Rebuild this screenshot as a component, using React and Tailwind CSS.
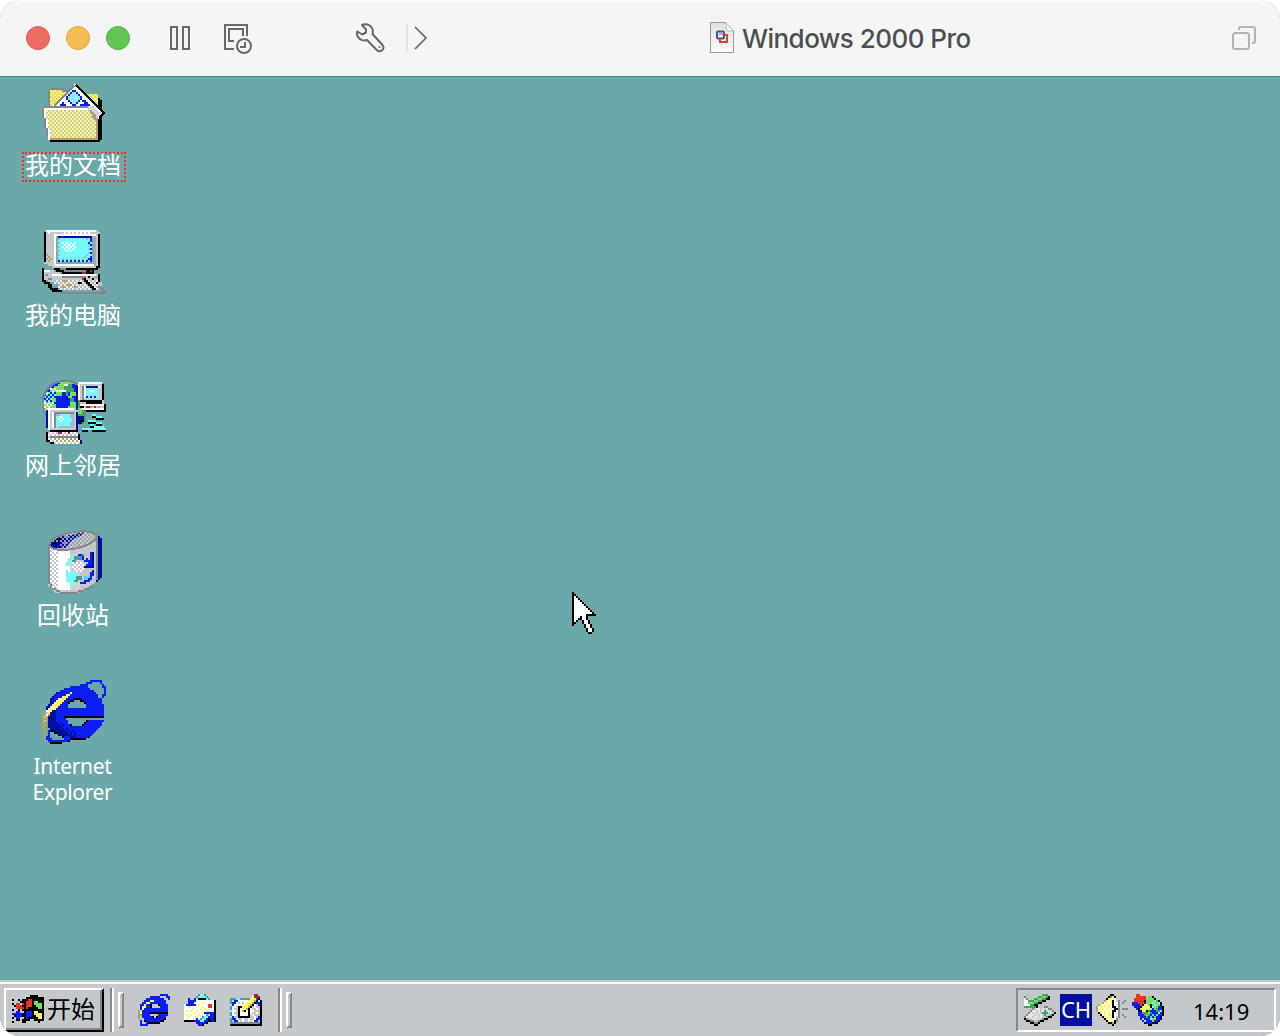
const CJK = "font-['Noto_Sans',_'Noto_Sans_CJK_SC',_sans-serif]";

const PALETTE = {
  K: "#000000", W: "#ffffff", B: "#0a1ef5", N: "#000f9e", C: "#75fbfd", T: "#4b9a9c",
  G: "#75e15a", D: "#3ea55a", R: "#ea3323", Y: "#fbf75c", O: "#b0a55a", S: "#c5c8ca",
  M: "#84888a", P: "#8c2a55", L: "#e4e6e7",
};

function Bitmap({ rows, className }) {
  const w = Math.max(...rows.map((r) => r.length));
  return (
    <svg className={className} width={w * 2} height={rows.length * 2} viewBox={`0 0 ${w} ${rows.length}`} shapeRendering="crispEdges">
      {rows.flatMap((row, y) =>
        [...row.matchAll(/([A-Z])\1*/g)].map((m) => (
          <rect key={`${y}-${m.index}`} x={m.index} y={y} width={m[0].length} height={1} fill={PALETTE[m[1]]} />
        )),
      )}
    </svg>
  );
}

function Check({ id, a, b }) {
  return (
    <pattern id={id} width="2" height="2" patternUnits="userSpaceOnUse">
      <rect width="2" height="2" fill={a} />
      <path d="M0 0h1v1h-1zM1 1h1v1h-1z" fill={b} />
    </pattern>
  );
}

function Icon32({ children }) {
  return (
    <svg width="64" height="64" viewBox="0 0 32 32" shapeRendering="crispEdges" className="block">
      {children}
    </svg>
  );
}

function DocsIcon() {
  return (
    <Icon32>
      <defs>
        <Check id="fold" a="#fbf87a" b="#c8cbb6" />
        <Check id="foldback" a="#fbf75c" b="#d9dc78" />
        <Check id="dia" a="#75fbfd" b="#a9dcf5" />
      </defs>
      <path d="M4 5h6v1h2v1h16v3h1v5H4z" fill="url(#foldback)" />
      <path d="M4 4h7v1H4zM3 5h1v8H3zM11 5h2v1h-2z" fill="#84888a" />
      <path d="M28 9h1v1h1v20h-2z" fill="#000" />
      <path d="M16.500 2L31 16.500l-3 3-4-5.500H5v-1z" fill="#fff" />
      <path d="M16 3L6 13" stroke="#84888a" strokeWidth="1" fill="none" />
      <path d="M17 2.500L31 16.500L28.500 19" stroke="#000" strokeWidth="1" fill="none" />
      <path d="M15 5h2v1h1v1h1v1h1v2h-1v1h-1v1h-1v1h-2v-1h-1v-1h-1v-1h-1V8h1V7h1V6h1z" fill="#0a1ef5" />
      <path d="M15 6h2v1h1v1h1v2h-1v1h-1v1h-2v-1h-1v-1h-1V8h1V7h1z" fill="url(#dia)" />
      <path d="M10 11h1v1h1v1H9v-1h1zM20 10h2v1h1v1h1v1h-5v-1h1z" fill="#0a1ef5" />
      <path d="M20 11h1v1h-1z" fill="#fff" />
      <path d="M2 14h22v1h2v1h1v1h1v13H4v-4H3v-5H2v-6H1v-1h1z" fill="url(#fold)" />
      <path d="M1 13h23v1H1zM0 14h1v5H0zM1 19h1v5H1zM2 24h1v4H2zM3 28h1v2H3z" fill="#84888a" />
      <path d="M1 14h22v1H2v4H1zM2 19h1v5H2zM3 24h1v6H3z" fill="#fff" />
      <path d="M23 13h3v1h1v1h1v1h2v1h-1v1h-1v1h-1v-1h-1v-1h-1v-2h-2z" fill="#d3d6d7" />
      <path d="M24 15h1v1h1v1h1v2h1v1h-2v-1h-1v-2h-1z" fill="#a5a28a" />
      <path d="M27 19h1v11H4v-1h23z" fill="#b0a55a" />
      <path d="M4 30h25v1H4z" fill="#000" />
    </Icon32>
  );
}

function ComputerIcon() {
  return (
    <Icon32>
      <defs>
        <Check id="scr" a="#75fbfd" b="#9fbcc8" />
        <Check id="scrb" a="#0a1ef5" b="#75fbfd" />
        <Check id="spark" a="#75fbfd" b="#ffffff" />
        <Check id="keys" a="#b4b7b9" b="#eceeef" />
        <Check id="trim" a="#c5c8ca" b="#ffffff" />
      </defs>
      <path d="M2 0h26v1h1v18H5v-1H3v-1H1V1h1z" fill="#c5c8ca" />
      <path d="M2 0h25v1H4v1H3V1H2z" fill="#fff" />
      <path d="M10 1h15v1H10z" fill="url(#trim)" />
      <path d="M1 1h1v15H1z" fill="#000" />
      <path d="M28 2h1v17h-1v1H6v-1h21v-1h1z" fill="#000" />
      <path d="M6 2h21v1H7v14h20v1H6z" fill="#fff" />
      <path d="M26 3h1v15h-1z" fill="#a5a9ab" />
      <path d="M7 3h19v14H7z" fill="url(#scr)" />
      <path d="M9 4h13v2h1v6h-2v2H9z" fill="#75fbfd" />
      <path d="M10 6h7v4h-1v1h-5V9h-1z" fill="url(#spark)" />
      <path d="M23 5h2v10h-2v-2h1V7h-1zM8 15h17v1H8z" fill="url(#scrb)" />
      <path d="M8 3h17v1H8z" fill="#000f9e" />
      <path d="M7 3h1v13H7zM25 4h1v13h-1zM7 16h19v1H7z" fill="#84a9ad" />
      <path d="M24 4h1v1h-1zM24 13h1v2h-1zM9 3h2v1H9z" fill="#0a1ef5" />
      <path d="M2 12h1v1H2zM3 13h1v1H3zM2 14h1v1H2zM4 14h1v1H4zM3 15h1v1H3z" fill="#b0a55a" />
      <path d="M7 20h19v2H10v-1H7z" fill="#000" />
      <path d="M9 19h3v1h10v1H11v-1H9z" fill="#84888a" />
      <path d="M1 20h5v1h3v1h19v4h2v3h-2v-2H6v-1H3v-1H1z" fill="#c5c8ca" />
      <path d="M1 20h3v1H1zM5 22h22v1H5z" fill="#fff" />
      <path d="M0 19h1v6h1v1h2v1h1v2h2v2H5v-1H4v-1H3v-2H1v-1H0zM28 22h1v4h-1z" fill="#000" />
      <path d="M2 22h1v1H2zM3 24h2v1H3zM10 23h12v1H10z" fill="#84888a" />
      <path d="M20 21h2v1h-2zM24 20h1v1h-1zM20 24h1v1h-1z" fill="#b01f4b" />
      <path d="M6 25h22v2h1v2h1v1H9v-1H8v-2H6z" fill="url(#keys)" />
      <path d="M10 25h3v1h-3zM12 27h3v1h-3zM10 28h2v1h-2zM16 28h2v1h-2zM26 23h2v1h-2zM25 26h1v1h-1z" fill="#b0a55a" />
      <path d="M21 24h1v1h1v1h1v1h1v1h1v1h1v1h-2v-1h-1v-1h-1v-1h-1v-1h-1zM25 24h1v1h-1zM27 26h1v1h-1zM23 23h1v1h-1zM18 26h2v1h-2z" fill="#000" />
      <path d="M28 28h2v1h1v1h1v2H9v-1h21v-1h-1v-1h-1z" fill="#84888a" />
      <path d="M6 29h2v1h2v1H7v-1H6z" fill="#000" />
    </Icon32>
  );
}

function NetworkIcon() {
  return (
    <Icon32>
      <defs>
        <Check id="sea" a="#75fbfd" b="#0a1ef5" />
        <Check id="land" a="#75e15a" b="#ffffff" />
        <Check id="kbd" a="#c5c8ca" b="#ffffff" />
        <Check id="kbk" a="#b0a55a" b="#ffffff" />
        <clipPath id="globe">
          <circle cx="11.500" cy="11.500" r="11.500" />
        </clipPath>
      </defs>
      <g clipPath="url(#globe)">
        <rect width="24" height="24" fill="#0a1ef5" />
        <path d="M9 1h3V0h4v1h2v1h-4v2h-2v2h-2v2H7v3H3V9H2V6h2V4h2V3h2V2h1z" fill="#75e15a" />
        <path d="M4 4h4v2H6v3H2V6h2zM0 11h6v6H1v-2H0z" fill="url(#land)" />
        <path d="M3 6h4v3H5v2H1V8h2z" fill="url(#sea)" />
        <path d="M11 2h3v1h-3zM8 5h4v1H8z" fill="#fff" />
        <path d="M13 2h2v2h1v2h-3v2h-1V5h-1V3h2zM13 8h2v1h1v2h-2V9h-1zM15 12h2v1h-2zM17 10h2v4h-3v-2h1z" fill="#3ea55a" />
        <path d="M14 6h3v2h-2v1h-2V8h1zM14 11h4v2h-1v2h-4v-2h1zM5 12h2v2H5z" fill="#75e15a" />
        <path d="M17 1h1v13h-1zM12 8h1v2h-1z" fill="#000f9e" />
        <circle cx="11.500" cy="11.500" r="11" fill="none" stroke="#84888a" />
      </g>
      <path d="M18 14h3v3h1v4h-1v1h-3z" fill="#3ea55a" />
      <path d="M18 14h2v3h-2z" fill="#75e15a" />
      <path d="M18 18h3v3h-1v1h-2z" fill="#000f9e" />
      <path d="M19 20h2v1h-1v1h-1z" fill="#000" />

      <path d="M18 1h12v1h1v9H19v-1h-1z" fill="#c5c8ca" />
      <path d="M18 1h12v1H19v8h-1zM21 3h8v1h-7v5h-1z" fill="#fff" />
      <path d="M20 3h1v7h9v1H20z" fill="#84888a" />
      <path d="M22 3h6v6h-6z" fill="#000f9e" />
      <path d="M22 4h6v4h-6z" fill="#75fbfd" />
      <path d="M24 5h2v1h-2z" fill="#fff" />
      <path d="M22 8h6v1h-6z" fill="url(#sea)" />
      <path d="M30 2h1v8h-1v1H19v-1h11z" fill="#000" />
      <path d="M19 11h12v5H22v-1h-3z" fill="#c5c8ca" />
      <path d="M19 12h12v1H19zM20 14h11v1H20z" fill="#fff" />
      <path d="M19 13h2v1h-2zM22 11h8v1h-8zM31 12h1v4H22v-1h9z" fill="#000" />
      <path d="M22 13h2v1h-2zM26 13h1v1h-1z" fill="#b01f4b" />
      <path d="M24 13h1v1h-1zM28 13h1v1h-1z" fill="#b0a55a" />

      <path d="M3 14h14v1h1v11H4v-1H3z" fill="#c5c8ca" />
      <path d="M3 14h13v1H4v10H3zM5 16h11v1H6v7H5z" fill="#fff" />
      <path d="M6 16h10v8H6z" fill="#84888a" />
      <path d="M7 17h9v7H7z" fill="#75fbfd" />
      <path d="M7 17h2v1H7zM14 17h2v7H8v-1h6v-2h1v-2h-1z" fill="#9fbcc8" />
      <path d="M9 18h1v1H9zM8 19h1v1H8zM10 19h1v1h-1zM9 20h1v1H9z" fill="#fff" />
      <path d="M2 15h1v9H2zM17 16h1v9h-1z" fill="#000f9e" />
      <path d="M4 25h14v1H4z" fill="#000" />
      <path d="M3 26h15v4h1v2H6v-1H3z" fill="url(#kbd)" />
      <path d="M6 29h12v2H6z" fill="url(#kbk)" />
      <path d="M2 26h1v4h1v1h2v1H4v-1H2zM18 27h1v3h-1z" fill="#000" />
      <path d="M4 28h14v1H4zM14 29h1v1h-1z" fill="#84888a" />
      <path d="M8 26h2v1H8zM13 26h1v1h-1z" fill="#b01f4b" />
      <path d="M19 30h1v2h-1z" fill="#000f9e" />

      <path d="M25 17h2v1h-2zM27 18h3v1h-3zM23 20h4v1h-4zM27 21h3v1h-3zM24 22h2v1h-2zM26 23h5v1h-5zM20 24h12v1H20z" fill="#75fbfd" />
      <path d="M25 18h2v1h-2zM27 19h4v1h-4zM23 21h4v1h-4zM27 22h3v1h-3zM24 23h2v1h-2zM20 25h3v1h-3zM25 25h7v1h-7z" fill="#000" />
    </Icon32>
  );
}

function BinIcon() {
  return (
    <Icon32>
      <defs>
        <Check id="bin" a="#ffffff" b="#c5c8ca" />
        <Check id="glass" a="#9da4a7" b="#c5c8ca" />
        <Check id="deep" a="#000f9e" b="#8a9fc0" />
        <clipPath id="mouth">
          <ellipse cx="15.500" cy="5.300" rx="11.500" ry="3.600" transform="rotate(-11 15.500 5.300)" />
        </clipPath>
      </defs>
      <path d="M3 7l13-6h8l3 2v23l-9 5.500H7L3 28z" fill="#c5c8ca" />
      <path d="M4 9h5v21H6l-2-2z" fill="url(#bin)" />
      <path d="M8 11h6v19H8zM5 10h9v1H5z" fill="#fff" />
      <path d="M14 12l5-1v19h-5z" fill="#d0d3d4" />
      <path d="M3 7h1v20H3zM4 27h1v2H4zM5 29h2v1H5zM7 30h2v1H7zM9 31h9v1H9zM18 30h3v1h-3zM21 29h3v1h-3zM24 28h2v1h-2z" fill="#84888a" />
      <g clipPath="url(#mouth)">
        <rect width="32" height="12" fill="url(#glass)" />
        <path d="M3 3h9l9-2-2 2-4 2-3 4H3z" fill="url(#deep)" />
        <path d="M4 6h5v3H4z" fill="#000f9e" />
        <path d="M7 4h3v1H7zM5 6h2v1H5z" fill="#000" />
        <path d="M9 7h1v1H9zM11 6h1v1h-1zM12 3h1v1h-1z" fill="#c06fd0" />
      </g>
      <ellipse cx="15.500" cy="5.300" rx="12" ry="4.100" transform="rotate(-11 15.500 5.300)" fill="none" stroke="#84888a" />
      <path d="M28 3h1v22h-1v1h-1v-1h1zM29 4h1v20h-1z" fill="#000f9e" />
      <path d="M27 2h1v23h-1z" fill="#84888a" />
      <path d="M13 14h2v-1h2v1h1v1h-3v1h-1v2h-2v-2h1z" fill="#75fbfd" />
      <path d="M12 20h1v1h5v1h-1v1h1v3h-2v2h-2v-2h-2z" fill="#75fbfd" />
      <path d="M16 13h3v-1h2v2h-1v1h-3v1h-2v-1h1zM17 23h3v2h-2v1h-2v-1h1z" fill="#4b9a9c" />
      <path d="M15 16h5v1h1v3h-1v1h-3v-1h-2z" fill="url(#bin)" />
      <path d="M18 12h2v1h1v2h1v-1h1v1h1v-4h2v8h-5v-1h1v-1h1v-1h-2v-1h-1v-2h-2z" fill="#0a1ef5" />
      <path d="M25 11h1v8h-5v-1h4z" fill="#000f9e" />
      <path d="M25 20h1v3h-1v2h-1v1h-2v1h-3v-1h2v-1h2v-2h1v-2h1z" fill="#0a1ef5" />
      <path d="M21 23h3v1h-1v1h-2z" fill="#75c9ee" />
    </Icon32>
  );
}

const IE_LARGE = [
  "........................BBBBBB..",
  "......................BBB....B..",
  "...................BBBB.......B.",
  "..............BBBBBBBBB.......BB",
  "...........BBBBBBBBBBBBB.......B",
  ".........BBBBBBBBBBBBBBBBB.....B",
  ".......NBBBBBBYBBBBBBBBBBBB....B",
  "......NBBBBBYYBBBBBBBBBBBBBB..BB",
  ".....NBBBBYYYBBBBBBBBBBBBBBB..B.",
  "....NNBBYYYYBBBBKKKKBBBBBBBBBB..",
  "....NBBYYYYBBBKK...KKBBBBBBBBB..",
  "....NBYYYYBBBK.......KBBBBBBBB..",
  "...NBYYYYBBBB.........BBBBBBBBB.",
  "..NNYWYYBBBBB.........BBBBBBBBB.",
  "..NYYWYBBBBBBBBBBBBBBBBBBBBBBBB.",
  ".OWWYNNBBBBBBBBBBBBBBBBBBBBBBBB.",
  ".OSYNNNBBBBBBBBBBBBBBBBBBBBBBBB.",
  "OOWONNNBBBBBBBBBBBBBBBBBBBBBBBB.",
  "OSONNNNBBBBKKKKKKKKKKKKKKKKKKKK.",
  "OOONNNNBBBBB...................",
  "OSONNNNBBBBBB.........KBBBBBBBB.",
  "OO.NNNNNBNBBB........KBBBBBBBB..",
  "OO.NNNNNNBNBBBK.....KBBBBBBBBB..",
  "OO.NNNNNNNBBBBBBBBBBBBBBBBBBB...",
  "OO..NNNNNNNBNBBBBBBBBBBBBBBB....",
  ".O.BKKNNNNNNBNBNBBBBBBBBBBB.....",
  ".O.B..KKNNNNNBNBNBBBBBBBBB......",
  ".O.B....KNNNNNNBNBBBBBBBB.......",
  ".OBB......KBBBNNNBBBBBBK........",
  "..BBB......BBBKKKKKKKK..........",
  "...BBBBBBBBBBK..................",
  "....KKKKKK......................",
];

const CURSOR = [
  "K", "KK", "KWK", "KWWK", "KWWWK", "KWWWWK", "KWWWWWK", "KWWWWWWK", "KWWWWWWWK",
  "KWWWWWWWWK", "KWWWWWWWWWK", "KWWWWWWKKKKK", "KWWWKWWK", "KWWKKWWK", "KWK..KWWK",
  "KK...KWWK", "K.....KWWK", "......KWWK", ".......KWWK", ".......KWWK", "........KK",
];

const FLAG = [
  ".........KKKK...",
  ".......KKKKKKKKK",
  "K..K.KKKRRKKKKKK",
  "....KKKRRRKGGKKK",
  "K.RR.RKRRRKGGGGK",
  ".KRRRKKRRRKKGGGK",
  "..RRRRKRKKKKKGGK",
  "K..K.KKKKKKKKKKK",
  "..BB..KBBBKYYKKK",
  "BBBBBKKBBBKYYYYK",
  ".KBBBKKBBBKKYYYK",
  "K.BB..KBKKKKKYYK",
  "..KK.KKKK..KKKKK",
  "K....KK......K..",
];

const IE_SMALL = [
  "...........BBBB.",
  "......BBBBB...BB",
  "....BBBBBBBBB..B",
  "...BBBYYBBBBBB..",
  "..BBYYBBBBBBBB..",
  ".BBYBBK...KBBBB.",
  ".BYYBBK....BBBB.",
  ".BYBBBBBBBBBBBB.",
  "OYBBBBBBBBBBBBB.",
  "OYBBBBKKKKKKKKK.",
  "OOBBBB....BBBBB.",
  "O.BBBBBK.KBBBB..",
  "O..BBBBBBBBBBK..",
  ".B.KBBBBBBBKK...",
  ".B..BKKKKKK.....",
  ".BBBB...........",
];

const MAIL = [
  ".......TCCT.....",
  "......TCCCCT....",
  "..B..BCKKKKCT...",
  "..BBBBWWWWWWWWWK",
  "..BBBWWWWYWWWWWK",
  "WBBBBBWYWWWWRRWK",
  "WWYWWWYWWYWWRRWK",
  "WWWWYWWWYWYWWWWK",
  "WYWYWWYWWWWYWWWK",
  "WWWWWYWWWYBBBBBK",
  "WYWYWWWYWWWTCBBK",
  "WWYWWYWWWTCCBBBK",
  "WYWWWWBWTCCBKBBK",
  "KKKKKBBBCCBBKKBK",
  "......BBBBBK....",
  ".......BBK......",
];

const DESKTOP = [
  "............PP..",
  "...........YPPP.",
  "TTTCCTTTTTYYYPK.",
  "TCBBWWWWWYYYOKCK",
  "TBBWSWSWYYYOKBBK",
  "CBWWWWWYYYOKWSBK",
  "TWWSKKYYYOKSWSSK",
  "TWSSKWYYOKWSSWSK",
  "CWWSKWOKWKWWSSSK",
  "TWSSKWWWWKWSSWSK",
  "TWWSKWWWWKSWSSSK",
  "CBSSKKKKKKSSWSBK",
  "TBBWSSWSSWSSWBBK",
  "TCBBWSWSSWSWBBCK",
  "MMMMMMMMMMMMMMMK",
  "KKKKKKKKKKKKKKKK",
];

const EJECT = [
  ".........DDD....",
  "D......DDGGDK...",
  "WD...DDGGDDKK...",
  "WWDDDGGDDKK.....",
  "WWGGGDDKK.......",
  "WWWDDKK.........",
  "DDDDDDKSSSMM....",
  "....MSLLSLSLMM..",
  "...MLLSLSLDSLSM.",
  "..MLSLSLSDDDSLSK",
  ".MLLLSLSLSDSSMK.",
  "MLLLSLLSLSSMKK..",
  "KMSSLLSLSMKK....",
  ".KKMMSSMKK......",
  "...KKMMK........",
  ".....KK.........",
];

const SPEAKER = [
  ".......KK.......",
  "......KMYK......",
  ".....KYWYWS.....",
  "....OYWYKWSM..M.",
  "...OWYWYKWWM.M..",
  ".OYWYWYWKWWM....",
  "OWYWYWYWKKWM....",
  "OYWYWYWYWKKM.MMM",
  "OWYWYWYWKKWM....",
  ".KYWYWYWKWWM....",
  "..KWYWYYKWWM.M..",
  "...KYWYWKWSM..M.",
  "....KYWYWWM.....",
  ".....KYWYKM.....",
  "......KKOK......",
  "........K.......",
];

const GLOBE = [
  "..RR............",
  "..RRRRR.GGK.....",
  ".RRRRRRGGGGK....",
  ".RRRRRKGGGGCTK..",
  "BBBRRRBGGGCGGCK.",
  "BBBBRKYYGKGCGGK.",
  ".BBBKYYYYKCGGBBK",
  "..BKYYYYYCBGDBBK",
  "...KNYYKDBBBDDCK",
  "...BBDDDGDBBBCBK",
  "...BBBDGDBGBGBBK",
  "....BBBDBGBGBBK.",
  "....BCBBBCGGBBK.",
  ".....BCBBBGBBK..",
  "......KBBBKKK...",
  "........KK......",
];

function Shortcut({ icon, label, focused }) {
  return (
    <div className="flex h-[150px] w-[104px] flex-col items-center">
      <div className="h-16 w-16">{icon}</div>
      {focused ? (
        <div className="mt-2 flex h-[30px] w-[104px] items-center justify-center border-2 border-dotted border-[#ea3323]">
          <span className="relative -top-[2px] -left-px whitespace-nowrap text-2xl leading-6">{label}</span>
        </div>
      ) : (
        <div className="mt-[9px] -ml-[2px] whitespace-nowrap text-2xl leading-6">{label}</div>
      )}
    </div>
  );
}

function LatinShortcut({ icon, lines }) {
  return (
    <div className="flex h-[150px] w-[104px] flex-col items-center">
      <div className="h-16 w-16">{icon}</div>
      <div className="mt-[11px] -ml-[3px] flex flex-col items-center gap-1 text-[21px] tracking-[-0.350px]">
        {lines.map((line) => (
          <span key={line} className="leading-[22px]">{line}</span>
        ))}
      </div>
    </div>
  );
}

function Gripper() {
  return (
    <div className="flex h-11 w-[14px] shrink-0 items-center justify-between">
      <div className="h-11 w-1 border-l-2 border-[#84888a] bg-white" />
      <div className="h-9 w-[6px] border-t-2 border-r-2 border-b-2 border-l-2 border-t-white border-r-[#84888a] border-b-[#84888a] border-l-white bg-[#c5c8ca]" />
    </div>
  );
}

function TitleBar() {
  return (
    <header className="flex h-[76px] shrink-0 items-center border-t-2 border-[#fafbfb] bg-[#f4f6f5] pb-[2px]">
      <div className="ml-[26px] flex gap-4">
        <span className="h-6 w-6 rounded-full border border-[#db5a50] bg-[#ed6b60]" />
        <span className="h-6 w-6 rounded-full border border-[#dba546] bg-[#f6be50]" />
        <span className="h-6 w-6 rounded-full border border-[#52ae43] bg-[#62c655]" />
      </div>
      <svg className="ml-10" width="20" height="24" viewBox="0 0 20 24" fill="none" stroke="#666968" strokeWidth="2">
        <path d="M1 1h6v22H1zM13 1h6v22h-6z" />
      </svg>
      <svg className="mt-[2px] ml-[34px]" width="28" height="30" viewBox="0 0 28 30" fill="none" stroke="#666968" strokeWidth="2">
        <path d="M10 25H1V1h22v11M10 17H5V5h14v7" />
        <circle cx="20" cy="22" r="7" />
        <path d="M21 18v5h-5" />
      </svg>
      <svg className="ml-[104px]" width="30" height="30" viewBox="0 0 30 30" fill="none" stroke="#666968" strokeWidth="2" strokeLinejoin="round" strokeLinecap="round">
        <path d="M6 2C9 .5 14 1 16 5c1 2 1 4 .5 6l10 11c3 4-2 8-5.500 5.200L11 17c-4 1.300-8-.5-9.500-4-.6-1.500-.7-3-.2-4.500l5 3L10 9.500V6.500z" />
        <circle cx="23.500" cy="24" r="1" fill="#666968" stroke="none" />
      </svg>
      <div className="ml-5 h-7 w-[2px] bg-[#e4e6e5]" />
      <svg className="ml-[6px]" width="14" height="24" viewBox="0 0 14 24" fill="none" stroke="#666968" strokeWidth="1.700">
        <path d="M1 1l11 11L1 23" />
      </svg>
      <svg className="ml-[282px]" width="24" height="32" viewBox="0 0 24 32">
        <defs>
          <linearGradient id="page" x1="0" y1="0" x2="0" y2="1">
            <stop offset="0" stopColor="#dfe0e0" />
            <stop offset="1" stopColor="#fcfcfc" />
          </linearGradient>
        </defs>
        <path d="M.5 .5h15L23.500 9v21.500H.5z" fill="url(#page)" stroke="#999c9c" />
        <path d="M15.500 .5l8 8.500h-6.500z" fill="#fff" stroke="#aaaeae" strokeWidth=".8" />
        <rect x="7" y="9.500" width="7" height="7" rx="1" fill="none" stroke="#2c5ca8" strokeWidth="2" />
        <path d="M14 13h3v7h-7v-4" fill="none" stroke="#e33f2b" strokeWidth="2" />
        <path d="M9 13l2-1.500 2 1.500" fill="none" stroke="#e33f2b" strokeWidth="1" />
      </svg>
      <h1 className="relative top-px ml-2 w-[260px] whitespace-nowrap font-['Inter',_sans-serif] text-[26px] leading-8 font-medium tracking-[-0.550px] text-[#4c4f4e]">Windows 2000 Pro</h1>
      <svg className="mr-6 ml-auto" width="24" height="24" viewBox="0 0 24 24" fill="none" stroke="#b2b4b3" strokeWidth="2">
        <rect x="1" y="7" width="16" height="16" rx="2.500" />
        <path d="M7 4V3q0-2 2-2h12q2 0 2 2v12q0 2-2 2h-1" />
      </svg>
    </header>
  );
}

function Taskbar() {
  return (
    <footer className="shrink-0 border-t-2 border-[#c5c8ca]">
      <div className="flex h-[54px] items-start border-t-2 border-white bg-[#c5c8ca] px-1 pt-1 text-black">
        <button className="flex h-11 w-[100px] shrink-0 items-center border-t-2 border-r-2 border-b-2 border-l-2 border-t-white border-r-black border-b-black border-l-white">
          <span className="flex h-10 w-24 items-center border-r-2 border-b-2 border-[#84888a] pl-[6px]">
            <Bitmap rows={FLAG} className="shrink-0" />
            <span className="ml-[3px] whitespace-nowrap text-2xl leading-6">开始</span>
          </span>
        </button>
        <div className="ml-[6px]"><Gripper /></div>
        <div className="mt-[6px] ml-[14px] flex gap-[14px]">
          <Bitmap rows={IE_SMALL} />
          <Bitmap rows={MAIL} />
          <Bitmap rows={DESKTOP} />
        </div>
        <div className="ml-4"><Gripper /></div>
        <div className="ml-auto flex h-11 w-[260px] items-start border-t-2 border-r-2 border-b-2 border-l-2 border-t-[#84888a] border-r-white border-b-white border-l-[#84888a] pt-1 pl-[6px]">
          <Bitmap rows={EJECT} />
          <div className="ml-1 flex h-8 w-8 items-center justify-center bg-[#000f9e] text-[22px] leading-8 text-white">
            <span className="relative -top-px">CH</span>
          </div>
          <Bitmap rows={SPEAKER} className="ml-1" />
          <Bitmap rows={GLOBE} className="ml-1" />
          <span className="ml-[29px] text-[22px] leading-[34px]">14:19</span>
        </div>
      </div>
    </footer>
  );
}

export default function App() {
  return (
    <div className="h-[1036px] w-[1280px] bg-white">
      <div className={`relative flex h-full w-full flex-col overflow-hidden rounded-[20px] bg-[#6ba8a9] text-white ${CJK}`}>
        <TitleBar />
        <main className="min-h-0 flex-1 border-t border-[#3f8484] pt-[3px] pl-[22px]">
          <Shortcut icon={<DocsIcon />} label="我的文档" focused />
          <Shortcut icon={<ComputerIcon />} label="我的电脑" />
          <Shortcut icon={<NetworkIcon />} label="网上邻居" />
          <Shortcut icon={<BinIcon />} label="回收站" />
          <LatinShortcut icon={<Bitmap rows={IE_LARGE} className="block" />} lines={["Internet", "Explorer"]} />
        </main>
        <Taskbar />
        <Bitmap rows={CURSOR} className="absolute top-[592px] left-[572px]" />
      </div>
    </div>
  );
}
